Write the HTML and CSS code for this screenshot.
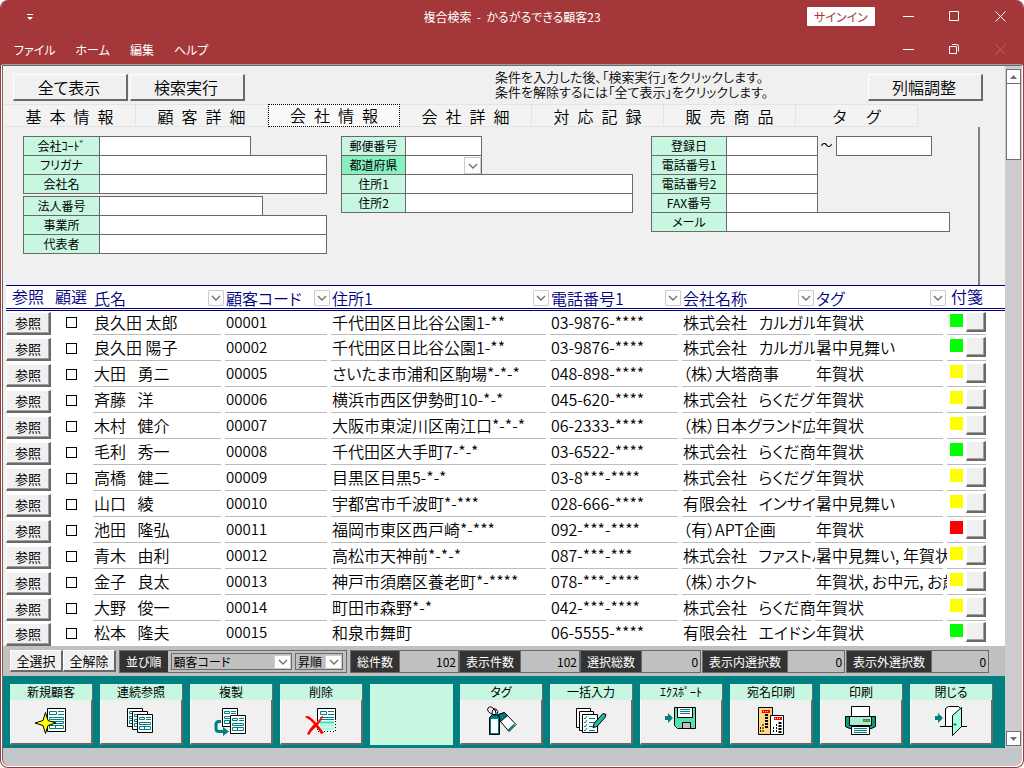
FILE: index.html
```
<!DOCTYPE html>
<html lang="ja">
<head>
    <meta charset="UTF-8">
    <meta name="viewport" content="width=device-width, initial-scale=1.0">
    <title>複合検索 - かるがるできる顧客23</title>
    <link rel="stylesheet" href="styles.css">
    <script src="script.js" defer></script>
</head>
<body>
<!-- shared icon parts -->
<svg class="defs" aria-hidden="true">
    <symbol id="chevron" viewBox="0 0 10 6"><path d="M1 1l4 4 4-4" fill="none" stroke="#707070" stroke-width="1.4"/></symbol>
    <symbol id="doc" viewBox="0 0 19 24">
        <path d="M.5.5h18v23h-18z" fill="#fff" stroke="#000"/>
        <path d="M2.500 3.500h7v3h-7zM11 3.500h6M11 6.500h6M2.500 9.500h14v2h-14zM2.500 13.500h14v2h-14zM2.500 17.500h14v3h-14zM8.500 17.500v3" fill="none" stroke="#008080"/>
    </symbol>
    <symbol id="doc-small" viewBox="0 0 16 19">
        <path d="M.5.5h15v18H.5z" fill="#fff" stroke="#000"/>
        <path d="M2.500 3.500h5v2h-5zM9 3.500h5M9 5.500h5M2.500 8.500h11v2h-11zM2.500 12.500h11v3h-11zM7.500 12.500v3" fill="none" stroke="#008080"/>
    </symbol>
</svg>

<div class="window">
    <header class="titlebar">
        <div class="title-row">
            <div class="side"><button class="quick" aria-label="クイックアクセス"><svg width="6" height="6" viewBox="0 0 6 6"><path d="M0 .5h6" stroke="#fff"/><path d="M0 3h6L3 6z" fill="#fff"/></svg></button></div>
            <h1>複合検索&nbsp; -&nbsp; かるがるできる顧客23</h1>
            <div class="window-buttons side">
                <button class="signin">サインイン</button>
                <button class="win" aria-label="最小化"><svg width="11" height="11"><path d="M0 5.500h11" stroke="#fff"/></svg></button>
                <button class="win" aria-label="最大化"><svg width="11" height="11"><path d="M.5.5h9v9h-9z" fill="none" stroke="#fff"/></svg></button>
                <button class="win" aria-label="閉じる"><svg width="11" height="11"><path d="M.5.5l10 10M10.500.5l-10 10" stroke="#fff"/></svg></button>
            </div>
        </div>
        <div class="menu-row">
            <nav>
                <a href="#">ファイル</a>
                <a href="#">ホーム</a>
                <a href="#">編集</a>
                <a href="#">ヘルプ</a>
            </nav>
            <div class="window-buttons">
                <button class="win" aria-label="最小化"><svg width="11" height="11"><path d="M0 5.500h11" stroke="#fff"/></svg></button>
                <button class="win" aria-label="元に戻す"><svg width="11" height="11"><path d="M.5 2.500h7v7h-7zM3 .5h4.500q2 0 2 2V7.500" fill="none" stroke="#fff"/></svg></button>
                <button class="win" aria-label="閉じる" disabled><svg width="11" height="11"><path d="M.5.5l10 10M10.500.5l-10 10" stroke="#d4585c"/></svg></button>
            </div>
        </div>
    </header>

    <div class="workspace">
        <main>
            <section class="search">
                <div class="search-top">
                    <button class="btn large">全て表示</button>
                    <button class="btn large">検索実行</button>
                    <p>条件を入力した後、「検索実行」をクリックします。<br>条件を解除するには「全て表示」をクリックします。</p>
                    <button class="btn large">列幅調整</button>
                </div>
                <div class="tabs">
                    <button>基&ensp;本&ensp;情&ensp;報</button>
                    <button>顧&ensp;客&ensp;詳&ensp;細</button>
                    <button class="active">会&ensp;社&ensp;情&ensp;報</button>
                    <button>会&ensp;社&ensp;詳&ensp;細</button>
                    <button>対&ensp;応&ensp;記&ensp;録</button>
                    <button>販&ensp;売&ensp;商&ensp;品</button>
                    <button class="narrow">タ&emsp;&nbsp;グ</button>
                </div>
                <form class="fields">
                    <div class="group company">
                        <div class="field"><label for="f1">会社ｺｰﾄﾞ</label><input id="f1" class="w-code"></div>
                        <div class="field"><label for="f2">フリガナ</label><input id="f2" class="w-long"></div>
                        <div class="field"><label for="f3">会社名</label><input id="f3" class="w-long"></div>
                        <div class="field split"><label for="f4">法人番号</label><input id="f4" class="w-corp"></div>
                        <div class="field"><label for="f5">事業所</label><input id="f5" class="w-long"></div>
                        <div class="field"><label for="f6">代表者</label><input id="f6" class="w-long"></div>
                    </div>
                    <div class="group address">
                        <div class="field"><label for="f7">郵便番号</label><input id="f7" class="w-zip"></div>
                        <div class="field">
                            <label for="f8" class="strong">都道府県</label>
                            <span class="combo w-zip"><select id="f8"><option></option></select><i class="arrow"><svg width="10" height="6"><use href="#chevron"/></svg></i></span>
                        </div>
                        <div class="field"><label for="f9">住所1</label><input id="f9" class="w-long"></div>
                        <div class="field"><label for="f10">住所2</label><input id="f10" class="w-long"></div>
                    </div>
                    <div class="group contact">
                        <div class="field"><label for="f11">登録日</label><input id="f11" class="w-tel"><span class="tilde">～</span><input class="w-date" aria-label="登録日 終了"></div>
                        <div class="field"><label for="f12">電話番号1</label><input id="f12" class="w-tel"></div>
                        <div class="field"><label for="f13">電話番号2</label><input id="f13" class="w-tel"></div>
                        <div class="field"><label for="f14">FAX番号</label><input id="f14" class="w-tel"></div>
                        <div class="field"><label for="f15">メール</label><input id="f15" class="w-mail"></div>
                    </div>
                </form>
            </section>

            <div class="list">
                <table>
                    <colgroup>
                        <col class="c-ref"><col class="c-check"><col class="c-name"><col class="c-code"><col class="c-addr">
                        <col class="c-tel"><col class="c-comp"><col class="c-tag"><col class="c-flag">
                    </colgroup>
                    <thead>
                        <tr>
                            <th class="up first">参照</th>
                            <th class="up">顧選</th>
                            <th><div>氏名<button aria-label="氏名"><svg width="10" height="6"><use href="#chevron"/></svg></button></div></th>
                            <th><div>顧客コード<button aria-label="顧客コード"><svg width="10" height="6"><use href="#chevron"/></svg></button></div></th>
                            <th><div>住所1<button aria-label="住所1"><svg width="10" height="6"><use href="#chevron"/></svg></button></div></th>
                            <th><div>電話番号1<button aria-label="電話番号1"><svg width="10" height="6"><use href="#chevron"/></svg></button></div></th>
                            <th><div>会社名称<button aria-label="会社名称"><svg width="10" height="6"><use href="#chevron"/></svg></button></div></th>
                            <th><div>タグ<button aria-label="タグ"><svg width="10" height="6"><use href="#chevron"/></svg></button></div></th>
                            <th class="up">付箋</th>
                        </tr>
                    </thead>
                    <tbody id="rows"></tbody>
                </table>
            </div>

            <div class="summary">
                <div class="select-buttons">
                    <button class="btn">全選択</button>
                    <button class="btn">全解除</button>
                </div>
                <div class="stat sort">
                    <span class="dark">並び順</span>
                    <span class="combo key"><select aria-label="並び順"><option>顧客コード</option></select><i class="arrow"><svg width="10" height="6"><use href="#chevron"/></svg></i></span>
                    <span class="combo order"><select aria-label="昇順・降順"><option>昇順</option></select><i class="arrow"><svg width="10" height="6"><use href="#chevron"/></svg></i></span>
                </div>
                <div class="stats">
                    <div class="stat"><span class="dark">総件数</span><output>102</output></div>
                    <div class="stat"><span class="dark">表示件数</span><output>102</output></div>
                    <div class="stat"><span class="dark">選択総数</span><output>0</output></div>
                    <div class="stat apart"><span class="dark">表示内選択数</span><output>0</output></div>
                    <div class="stat apart"><span class="dark">表示外選択数</span><output>0</output></div>
                </div>
            </div>

            <div class="actions">
                <button><span>新規顧客</span>
                    <svg viewBox="0 0 36 32">
                        <use href="#doc" x="14" y="2" width="19" height="24"/>
                        <path d="M12.500 6.500l2.500 8 8 2.500-8 2.500-2.500 8-2.500-8-8-2.500 8-2.500z" fill="#ff0" stroke="#000"/>
                    </svg>
                </button>
                <button><span>連続参照</span>
                    <svg viewBox="0 0 36 32">
                        <use href="#doc-small" x="4" y="2" width="16" height="19"/>
                        <use href="#doc-small" x="9" y="5" width="16" height="19"/>
                        <use href="#doc-small" x="14" y="8" width="16" height="19"/>
                    </svg>
                </button>
                <button><span>複製</span>
                    <svg viewBox="0 0 36 32">
                        <use href="#doc-small" x="9" y="2" width="16" height="19"/>
                        <use href="#doc-small" x="17" y="9" width="16" height="19"/>
                        <path d="M8 15.500H6q-3 0-3 3v4q0 3 3 3h5" fill="none" stroke="#008080" stroke-width="3"/>
                        <path d="M10 21l6 4.500-6 4.500z" fill="#008080"/>
                    </svg>
                </button>
                <button><span>削除</span>
                    <svg viewBox="0 0 36 32">
                        <path d="M14.500 14V2.500h18V14" fill="#fff" stroke="#000"/>
                        <path d="M14.500 14v11.500h18V14" fill="#eafff5" stroke="#000" stroke-dasharray="1 2"/>
                        <path d="M17.500 5.500h6v3h-6zM25 5.500h6M25 8.500h6M17 11.500h14M17 13.500h14" fill="none" stroke="#008080"/>
                        <path d="M17 16.500h14" stroke="#40d8b8" stroke-width="2"/>
                        <path d="M17 19.500h14M17 22.500h14" stroke="#a0f8d8" stroke-width="2"/>
                        <path d="M2 11q2-2 5 0 4 3 6 6 5-5 6-7h1q0 2-5 9 3 4 6 8l-3 1q-2-4-5-7-4 3-7 8l-2-1q3-6 7-10-3-4-9-7z" fill="#f00"/>
                    </svg>
                </button>
                <div class="blank"></div>
                <button><span>タグ</span>
                    <svg viewBox="0 0 36 32">
                        <path d="M15.500 8.500l6-2 11.500 12-7 7-11-13z" fill="#fff" stroke="#000"/>
                        <path d="M15.500 8.500l6-2 3 3-7 6z" fill="#008080" stroke="#000"/>
                        <path d="M31.500 18.500l-6 6" stroke="#008080" stroke-width="2"/>
                        <path d="M6.500 11.500l3-3h4l3 3v17h-10z" fill="#008080" stroke="#000"/>
                        <path d="M8 13h7v14H8z" fill="#fff"/>
                        <path d="M11 9Q3 6 5 2q3-3 7 2 2 3 0 6M9 8q0-6 4-5 3 2 1 6" fill="none" stroke="#000"/>
                    </svg>
                </button>
                <button><span>一括入力</span>
                    <svg viewBox="0 0 36 32">
                        <path d="M3.500 2.500h14v19h-14z" fill="#fff" stroke="#000"/>
                        <path d="M6.500 5.500h14v19h-14z" fill="#fff" stroke="#000"/>
                        <path d="M9.500 8.500h15v18h-15z" fill="#fff" stroke="#000"/>
                        <path d="M11 12l1 1 2-3M11 16l1 1 2-3M11 20l1 1 2-3M11 24l1 1 2-3" fill="none" stroke="#008080"/>
                        <path d="M16 12.500h6M16 16.500h6M16 20.500h5M16 24.500h6" stroke="#008080"/>
                        <path d="M30 7.500l3 1-1 3-8 9-4 1 1-4z" fill="#20b8a0" stroke="#000"/>
                    </svg>
                </button>
                <button><span>ｴｸｽﾎﾟｰﾄ</span>
                    <svg viewBox="0 0 36 32">
                        <path d="M2 10h3V7l5 5-5 5v-3H2z" fill="#008080"/>
                        <path d="M11.500 1.500h21v21h-18l-3-3z" fill="#58e0b0" stroke="#000"/>
                        <path d="M14.500 1.500h15v10h-15z" fill="#fff" stroke="#000"/>
                        <path d="M17 3.500h10M17 5.500h10M17 7.500h10" stroke="#008080"/>
                        <path d="M19.500 22.500v-6h8v6z" fill="#c0c0c0" stroke="#000"/>
                    </svg>
                </button>
                <button><span>宛名印刷</span>
                    <svg viewBox="0 0 36 32">
                        <path d="M5.500 1.500h14v27h-14z" fill="#ffd880" stroke="#000"/>
                        <path d="M9 4h8v3H9z" fill="#f00"/>
                        <path d="M10 5.500h6" stroke="#ffd880" stroke-dasharray="1 1"/>
                        <path d="M13.500 8v15" stroke="#000" stroke-width="3" stroke-dasharray="2 1"/>
                        <path d="M10 18v8M7.500 21v6" stroke="#000" stroke-dasharray="2 1"/>
                        <path d="M17.500 9.500h13v19h-13z" fill="#fff" stroke="#000"/>
                        <path d="M21 11h8v3h-8z" fill="#f00"/>
                        <path d="M22 12.500h6" stroke="#fff" stroke-dasharray="1 1"/>
                        <path d="M27 16v11" stroke="#000" stroke-width="3" stroke-dasharray="2 1"/>
                        <path d="M23.500 18v9M20.500 21v6" stroke="#000" stroke-dasharray="2 1"/>
                    </svg>
                </button>
                <button><span>印刷</span>
                    <svg viewBox="0 0 36 32">
                        <path d="M2.500 10.500h30v10l-4 2h-22l-4-2z" fill="#00a080" stroke="#000"/>
                        <path d="M6.500 10.500h22v9h-22z" fill="#a8f0d0" stroke="#000"/>
                        <path d="M8.500.5h18v10h-18z" fill="#fff" stroke="#000"/>
                        <path d="M20 14.500h7" stroke="#707070" stroke-width="3"/>
                        <path d="M21 14.500h5" stroke="#0f0" stroke-dasharray="2 1"/>
                        <path d="M8.500 20.500h18v8h-18z" fill="#fff" stroke="#000"/>
                        <path d="M11 22.500h13M11 24.500h13M11 26.500h13" stroke="#008080"/>
                    </svg>
                </button>
                <button><span>閉じる</span>
                    <svg viewBox="0 0 36 32">
                        <path d="M2 10h3V7l5 5-5 5v-3H2z" fill="#008080"/>
                        <path d="M12.500 20.500v-18l3-2h10l3 3v17" fill="#fff" stroke="#000"/>
                        <path d="M7 20.500h27" stroke="#000"/>
                        <path d="M19.500 9.500l9-8v19l-9 9z" fill="#a8ffd8" stroke="#000"/>
                        <path d="M20.500 18.500h3M22 17v3" stroke="#008080"/>
                    </svg>
                </button>
            </div>
        </main>

        <aside class="scrollbar">
            <button aria-label="上へ"><svg width="7" height="4"><path d="M0 4l3.500-4L7 4z" fill="#707070"/></svg></button>
            <div class="thumb"></div>
            <button class="down" aria-label="下へ"><svg width="7" height="4"><path d="M0 0h7L3.500 4z" fill="#707070"/></svg></button>
        </aside>
    </div>
    <footer class="statusbar"></footer>
</div>
</body>
</html>
```
FILE: styles.css
```
* {
    box-sizing: border-box;
}
body {
    margin: 0;
    background: #fff;
    color: #000;
    font-family: "Noto Sans CJK JP", sans-serif;
    font-size: 16px;
    font-weight: 350;
    font-feature-settings: "palt";
}
button, input, select {
    margin: 0;
    padding: 0;
    border: 0;
    border-radius: 0;
    background: none;
    color: inherit;
    font: inherit;
    font-feature-settings: inherit;
}
.defs {
    position: absolute;
    width: 0;
    height: 0;
}
svg {
    display: block;
}
.window {
    display: flex;
    flex-direction: column;
    min-height: 100vh;
    border: 1px solid #a4373a;
    border-top: 0;
    border-radius: 8px;
    background: #fff;
    overflow: hidden;
}

/* title bar and menu */
.titlebar {
    background: #a4373a;
    color: #fff;
    font-size: 12px;
    font-weight: 400;
}
.title-row, .menu-row {
    display: flex;
    align-items: center;
    justify-content: space-between;
    height: 33px;
}
.menu-row {
    height: 32px;
}
.side {
    flex: 1;
}
.quick {
    display: block;
    margin-left: 26px;
}
.title-row h1 {
    margin: 0;
    font-size: 12px;
    font-weight: 400;
}
.window-buttons {
    display: flex;
    align-items: center;
    justify-content: flex-end;
}
.win {
    display: flex;
    justify-content: center;
    width: 46px;
}
.signin {
    width: 68px;
    height: 19px;
    margin-right: 10px;
    border-radius: 1px;
    background: #fff;
    color: #a4373a;
}
.menu-row nav {
    display: flex;
    gap: 20px;
    padding-left: 13px;
}
.menu-row a {
    color: #fff;
    text-decoration: none;
}

.workspace {
    display: flex;
    flex: 1;
    margin: 0 1px;
    border-top: 1px solid #696969;
    border-left: 1px solid #696969;
    box-shadow: 0 -1px #a0a0a0;
    background: #f0f0f0;
}
main {
    display: flex;
    flex: 1;
    flex-direction: column;
    min-width: 0;
}

/* raised grey buttons */
.btn {
    border-style: solid;
    border-width: 1px 2px 2px 1px;
    border-color: #fff #696969 #696969 #fff;
    background: #f0f0f0;
}
.btn.large {
    width: 115px;
    height: 27px;
    padding-right: 2px;
    line-height: 21px;
}

/* search area */
.search {
    height: 219px;
}
.search-top {
    display: flex;
    gap: 2px;
    height: 38px;
    padding: 8px 22px 0 10px;
}
.search-top p {
    flex: 1;
    margin: -5px 0 0 248px;
    font-size: 13px;
    line-height: 15px;
}
.tabs {
    display: flex;
    height: 23px;
    padding-left: 1px;
}
.tabs button {
    width: 132px;
    height: 23px;
    border: 1px solid #e4e4e4;
    border-left: 0;
    background: #f3f3f3;
    line-height: 20px;
}
.tabs .active {
    border: 1px dotted #000;
    background: #fafafa;
    line-height: 17px;
}
.tabs .narrow {
    width: 122px;
}
.fields {
    display: flex;
    height: 158px;
    margin-right: 25px;
    padding: 9px 0 0 20px;
    border-right: 2px solid #808080;
    font-size: 12px;
    font-weight: 400;
}
.group.address {
    margin-left: 14px;
}
.group.contact {
    margin-left: 18px;
}
.field {
    display: flex;
    height: 20px;
    margin-bottom: -1px;
}
.field.split {
    margin-top: 3px;
}
.field label {
    width: 77px;
    border: 1px solid #696969;
    background: #c8f7e1;
    line-height: 17px;
    text-align: center;
}
.address label {
    width: 65px;
}
.contact label {
    width: 76px;
}
.field .strong {
    background: #88f0c0;
}
.field input, .field .combo {
    margin-left: -1px;
    border: 1px solid #696969;
    background: #fff;
}
.w-code { width: 152px; }
.w-corp { width: 164px; }
.w-long { width: 228px; }
.w-zip { width: 77px; }
.w-tel { width: 92px; }
.w-mail { width: 224px; }
.field .tilde {
    width: 18px;
    padding-right: 1px;
    line-height: 18px;
    text-align: center;
}
.field .w-date {
    width: 96px;
    margin-left: 0;
}

/* drop-downs */
.combo {
    position: relative;
    display: block;
}
.combo select {
    display: block;
    width: 100%;
    height: 100%;
    padding-left: 2px;
    appearance: none;
}
.arrow {
    position: absolute;
    top: 1px;
    right: 0;
    bottom: 0;
    display: flex;
    align-items: center;
    justify-content: center;
    width: 17px;
    border: 1px solid #ccc;
    background: #fdfdfd;
    pointer-events: none;
}

/* customer list */
.list {
    flex: 1;
    margin-left: 3px;
    border-top: 1px solid #000080;
    background: #fff;
}
table {
    width: 100%;
    border-spacing: 0;
    table-layout: fixed;
}
.c-ref { width: 45px; }
.c-check { width: 42px; }
.c-name { width: 132px; }
.c-code { width: 106px; }
.c-addr { width: 219px; }
.c-tel { width: 132px; }
.c-comp { width: 133px; }
.c-tag { width: 132px; }
th {
    height: 25px;
    padding: 0 0 0 1px;
    border-bottom: 3px double #000080;
    color: #000080;
    font-weight: inherit;
    line-height: 18px;
    text-align: left;
    white-space: nowrap;
}
th.up {
    padding: 0 0 3px 4px;
}
th.first {
    padding-left: 6px;
}
th div {
    display: flex;
    align-items: center;
    justify-content: space-between;
    padding-top: 2px;
}
th button {
    display: flex;
    align-items: center;
    justify-content: center;
    width: 16px;
    height: 16px;
    margin-right: 1px;
    border: 1px solid #ccc;
    border-radius: 1px;
    background: #fdfdfd;
}
td {
    height: 26px;
    padding: 0 0 3px 1px;
    line-height: 20px;
    white-space: nowrap;
    overflow: hidden;
    background: linear-gradient(#bbb, #bbb) left bottom / calc(100% - 4px) 1px no-repeat;
}
tbody tr:first-child td {
    height: 24px;
}
tbody tr:last-child td {
    height: 25px;
    background: none;
}
td.plain {
    padding: 0;
    background: none;
    vertical-align: bottom;
}
td.num {
    font-size: 15px;
}
td .btn {
    display: block;
    width: 45px;
    height: 23px;
    font-size: 13px;
    font-weight: 400;
    line-height: 18px;
    box-shadow: inset -1px -1px #a0a0a0;
}
td input {
    display: block;
    width: 11px;
    height: 11px;
    margin: 0 0 7px 15px;
    border: 1px solid #000;
    appearance: none;
}
td.flag {
    padding: 0 0 3px 3px;
    background-size: calc(100% - 19px) 1px;
}
.flag div {
    display: flex;
    gap: 3px;
}
.flag i {
    width: 13px;
    height: 13px;
    margin-top: 2px;
}
.green { background: #0f0; }
.yellow { background: #ff0; }
.red { background: #f00; }
.flag .btn {
    width: 20px;
    height: 20px;
}

/* counters */
.summary {
    display: flex;
    gap: 3px;
    height: 30px;
    padding: 4px 0 0 7px;
    background: #c0c0c0;
    font-size: 12px;
    font-weight: 400;
    white-space: nowrap;
}
.select-buttons {
    display: flex;
    width: 106px;
}
.select-buttons .btn {
    flex: 1;
    height: 22px;
    font-size: 13px;
    line-height: 18px;
}
.stats {
    display: flex;
}
.stat {
    display: flex;
    height: 23px;
    border: 1px solid #696969;
    line-height: 21px;
}
.dark {
    padding: 0 6px;
    background: #333;
    color: #fff;
}
.stat output {
    width: 59px;
    padding-right: 2px;
    border-left: 1px solid #696969;
    text-align: right;
}
.stat.apart {
    margin-left: 1px;
}
.apart output {
    width: 57px;
}
.stat.sort {
    width: 228px;
    gap: 3px;
}
.summary .combo {
    height: 17px;
    margin-top: 2px;
    border: 1px solid #696969;
    line-height: 14px;
}
.summary .key {
    flex: 1;
}
.summary .order {
    width: 48px;
    margin-right: 3px;
}

/* bottom actions */
.actions {
    display: grid;
    grid-template-columns: repeat(11, 83px);
    gap: 7px;
    height: 72px;
    padding: 8px 7px 3px;
    background: #008080;
}
.actions button {
    display: flex;
    flex-direction: column;
    align-items: center;
    border-style: solid;
    border-width: 0 2px 2px 1px;
    border-color: #fff #696969 #696969 #fff;
    background: #f0f0f0;
    font-size: 12px;
    font-weight: 400;
}
.actions span {
    align-self: stretch;
    height: 16px;
    margin: 0 -1px;
    background: #c8f7e1;
    line-height: 15px;
}
.actions svg {
    width: 36px;
    height: 32px;
    margin-top: 6px;
}
.blank {
    background: #c8f7e1;
}

.scrollbar {
    display: flex;
    flex-direction: column;
    width: 17px;
    padding: 3px 1px 2px;
    background: #cdcdcd;
}
.scrollbar button {
    display: flex;
    align-items: center;
    justify-content: center;
    height: 15px;
    border: 1px solid #707070;
    background: #fff;
}
.thumb {
    height: 77px;
    margin-top: -1px;
    border: 1px solid #707070;
    background: #fff;
}
.scrollbar .down {
    margin-top: auto;
}
.statusbar {
    height: 18px;
    margin: 0 1px 1px;
    border-left: 1px solid #696969;
    border-radius: 0 0 7px 7px;
    background: #c5c6ca;
}
```
FILE: script.js
```
const customers = [
    ['良久田 太郎', '00001', '千代田区日比谷公園1-**', '03-9876-****', '株式会社　カルガル', '年賀状', 'green'],
    ['良久田 陽子', '00002', '千代田区日比谷公園1-**', '03-9876-****', '株式会社　カルガル', '暑中見舞い', 'green'],
    ['大田　勇二', '00005', 'さいたま市浦和区駒場*-*-*', '048-898-****', '（株）大塔商事', '年賀状', 'yellow'],
    ['斉藤　洋', '00006', '横浜市西区伊勢町10-*-*', '045-620-****', '株式会社　らくだグル', '年賀状', 'yellow'],
    ['木村　健介', '00007', '大阪市東淀川区南江口*-*-*', '06-2333-****', '（株）日本グランド広', '年賀状', 'yellow'],
    ['毛利　秀一', '00008', '千代田区大手町7-*-*', '03-6522-****', '株式会社　らくだ商', '年賀状', 'green'],
    ['高橋　健二', '00009', '目黒区目黒5-*-*', '03-8***-****', '株式会社　らくだグル', '年賀状', 'yellow'],
    ['山口　綾', '00010', '宇都宮市千波町*-***', '028-666-****', '有限会社　インサイ', '暑中見舞い', 'yellow'],
    ['池田　隆弘', '00011', '福岡市東区西戸崎*-***', '092-***-****', '（有）APT企画', '年賀状', 'red'],
    ['青木　由利', '00012', '高松市天神前*-*-*', '087-***-***', '株式会社　ファストハ', '暑中見舞い, 年賀状', 'yellow'],
    ['金子　良太', '00013', '神戸市須磨区養老町*-****', '078-***-****', '（株）ホクト', '年賀状, お中元, お歳', 'yellow'],
    ['大野　俊一', '00014', '町田市森野*-*', '042-***-****', '株式会社　らくだ商', '年賀状', 'yellow'],
    ['松本　隆夫', '00015', '和泉市舞町', '06-5555-****', '有限会社　エイドシン', '年賀状', 'green']
];

// a full-width space is too wide next to proportional kana
const narrow = text => text.replace(/　/g, '&ensp;&nbsp;');

document.getElementById('rows').innerHTML = customers.map(([name, code, address, tel, company, tag, flag]) => `
    <tr>
        <td class="plain"><button class="btn">参照</button></td>
        <td class="plain"><input type="checkbox" aria-label="${name}"></td>
        <td>${narrow(name)}</td>
        <td class="num">${code}</td>
        <td>${address}</td>
        <td>${tel}</td>
        <td>${narrow(company)}</td>
        <td>${tag}</td>
        <td class="flag"><div><i class="${flag}"></i><button class="btn" aria-label="付箋"></button></div></td>
    </tr>`).join('');
```
